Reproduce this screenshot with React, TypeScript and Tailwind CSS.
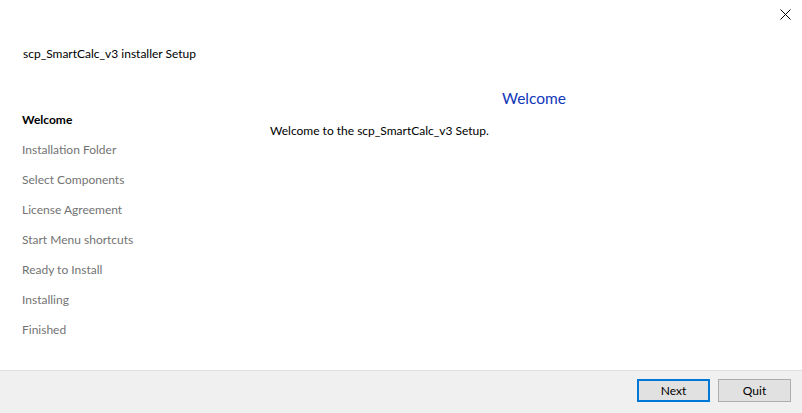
import React from 'react';

const steps = [
  'Welcome',
  'Installation Folder',
  'Select Components',
  'License Agreement',
  'Start Menu shortcuts',
  'Ready to Install',
  'Installing',
  'Finished',
];

const App: React.FC = () => {
  const current = 0;

  return (
    <div
      className="w-[802px] h-[413px] bg-white flex flex-col text-[12px] text-black"
      style={{ fontFamily: '"Segoe UI", Lato, "Noto Sans", sans-serif' }}
    >
      {/* Title row */}
      <div className="h-[88px] relative">
        <div className="absolute left-[23px] top-[46px] leading-[16px]">scp_SmartCalc_v3 installer Setup</div>
        <button className="absolute right-[11px] top-[8px] w-[12px] h-[12px] flex items-center justify-center" aria-label="Close">
          <svg width="11" height="11" viewBox="0 0 11 11">
            <path d="M0.5 0.5 L10.5 10.5 M10.5 0.5 L0.5 10.5" stroke="#000" strokeWidth="1" />
          </svg>
        </button>
      </div>

      <div className="flex-1 flex">
        {/* Steps sidebar */}
        <ul className="w-[248px] pl-[22px] pt-[24px]">
          {steps.map((step, i) => (
            <li
              key={step}
              className={
                i === current
                  ? 'h-[30px] leading-[16px] font-bold text-black'
                  : 'h-[30px] leading-[16px] text-[#737373]'
              }
            >
              {step}
            </li>
          ))}
        </ul>

        {/* Page content */}
        <div className="flex-1 pr-[4px]">
          <h1 className="text-center text-[15.5px] leading-[20px] text-[#0f37b8] ml-[22px]">Welcome</h1>
          <p className="mt-[15px] ml-[22px] leading-[16px]">Welcome to the scp_SmartCalc_v3 Setup.</p>
        </div>
      </div>

      {/* Footer */}
      <div className="h-[43px] bg-[#f0f0f0] border-t border-[#dfdfdf] flex items-start justify-end gap-[8px] pt-[8px] pr-[11px]">
        <button className="w-[73px] h-[23px] bg-[#e1e1e1] border-2 border-[#0078d7] leading-[19px]">Next</button>
        <button className="w-[73px] h-[23px] bg-[#e1e1e1] border border-[#adadad] leading-[21px]">Quit</button>
      </div>
    </div>
  );
};

export default App;
